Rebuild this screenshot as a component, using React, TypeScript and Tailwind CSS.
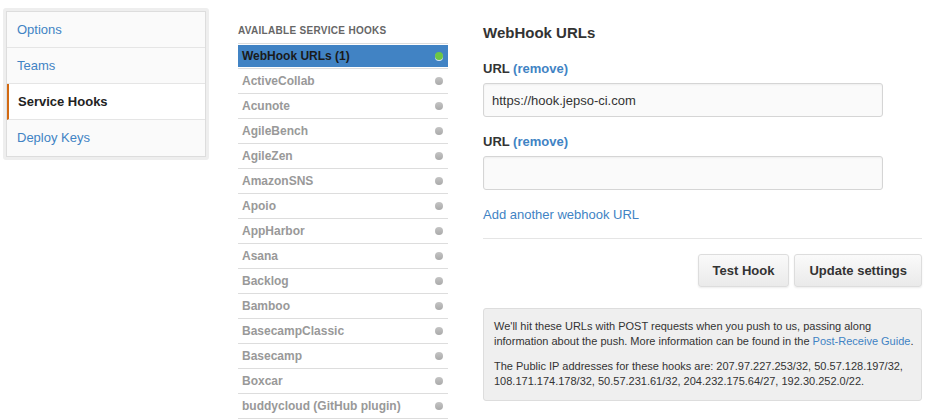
import React from "react";

const navItems = ["Options", "Teams", "Service Hooks", "Deploy Keys"];

const hooks = [
  "WebHook URLs (1)",
  "ActiveCollab",
  "Acunote",
  "AgileBench",
  "AgileZen",
  "AmazonSNS",
  "Apoio",
  "AppHarbor",
  "Asana",
  "Backlog",
  "Bamboo",
  "BasecampClassic",
  "Basecamp",
  "Boxcar",
  "buddycloud (GitHub plugin)",
];

const SideNav = () => (
  <div className="mt-[8px] ml-[3px] w-[206px] shrink-0 self-start rounded-[3px] bg-[#eeeeee] p-[3px]">
    <ul className="border border-[#dddddd] bg-[#fafafa]">
      {navItems.map((item, i) => {
        const active = item === "Service Hooks";
        const last = i === navItems.length - 1;
        return (
          <li
            key={item}
            className={`flex h-[36px] items-center text-[13px] ${
              last ? "" : "border-b border-[#e5e5e5]"
            } ${
              active
                ? "border-l-2 border-l-[#d26911] bg-white pl-[9px] font-bold text-[#222]"
                : "pl-[10px] text-[#4183c4]"
            }`}
          >
            {item}
          </li>
        );
      })}
    </ul>
  </div>
);

const HookList = () => (
  <div className="ml-[29px] w-[210px] shrink-0 pt-[24px]">
    <h3 className="text-[10px] leading-[13px] font-bold tracking-[0.3px] text-[#666]">
      AVAILABLE SERVICE HOOKS
    </h3>
    <ul className="mt-[6px] border-t border-[#dddddd]">
      {hooks.map((hook, i) => {
        const active = i === 0;
        return (
          <li key={hook} className="border-b border-[#dddddd] py-px">
            <div
              className={`flex h-[22px] items-center justify-between pr-[5px] pl-[4px] text-[12px] leading-[22px] font-bold ${
                active ? "bg-[#4183c4] text-[#1a1a1a]" : "text-[#999]"
              }`}
            >
              <span>{hook}</span>
              <span
                className={`h-[8px] w-[8px] rounded-full ${
                  active
                    ? "bg-[#6cc644] shadow-[0_1px_0_rgba(255,255,255,0.8)]"
                    : "bg-gradient-to-b from-[#c4c4c4] to-[#aaaaaa]"
                }`}
              />
            </div>
          </li>
        );
      })}
    </ul>
  </div>
);

const UrlField = ({ value }: { value: string }) => (
  <div>
    <label className="block text-[13px] leading-[18px] font-bold text-[#333]">
      URL <span className="text-[#4183c4]">(remove)</span>
    </label>
    <input
      readOnly
      value={value}
      className="mt-[5px] block h-[34px] w-[400px] rounded-[3px] border border-[#d5d5d5] bg-[#fafafa] px-[8px] text-[13px] text-[#333] shadow-[inset_0_1px_2px_rgba(0,0,0,0.05)] outline-none"
    />
  </div>
);

const Button = ({ children }: { children: React.ReactNode }) => (
  <button className="h-[33px] rounded-[3px] border border-[#dddddd] bg-gradient-to-b from-[#fafafa] to-[#eaeaea] px-[14px] text-[13px] font-bold text-[#333] shadow-[0_1px_2px_rgba(0,0,0,0.08)]">
    {children}
  </button>
);

const WebHookPanel = () => (
  <div className="ml-[35px] w-[439px] shrink-0 pt-[23px]">
    <h2 className="text-[15px] leading-[20px] font-bold text-[#333]">
      WebHook URLs
    </h2>
    <div className="mt-[17px]">
      <UrlField value="https://hook.jepso-ci.com" />
    </div>
    <div className="mt-[16px]">
      <UrlField value="" />
    </div>
    <a className="mt-[16px] block text-[13px] leading-[18px] text-[#4183c4]">
      Add another webhook URL
    </a>
    <hr className="mt-[14px] border-t border-[#e5e5e5]" />
    <div className="mt-[15px] flex justify-end gap-[5px]">
      <Button>Test Hook</Button>
      <Button>Update settings</Button>
    </div>
    <div className="mt-[21px] rounded-[3px] border border-[#dddddd] bg-[#efefef] px-[10px] pt-[10px] pb-[11px] text-[11px] leading-[15px] whitespace-nowrap text-[#333]">
      <p className="mb-[10px]">
        We'll hit these URLs with POST requests when you push to us, passing along
        <br />
        information about the push. More information can be found in the{" "}
        <a className="text-[#4183c4]">Post-Receive Guide</a>.
      </p>
      <p>
        The Public IP addresses for these hooks are: 207.97.227.253/32, 50.57.128.197/32,
        <br />
        108.171.174.178/32, 50.57.231.61/32, 204.232.175.64/27, 192.30.252.0/22.
      </p>
    </div>
  </div>
);

export default function App() {
  return (
    <div className="flex min-h-[419px] w-[944px] bg-white font-['Liberation_Sans',Arial,sans-serif]">
      <SideNav />
      <HookList />
      <WebHookPanel />
    </div>
  );
}
